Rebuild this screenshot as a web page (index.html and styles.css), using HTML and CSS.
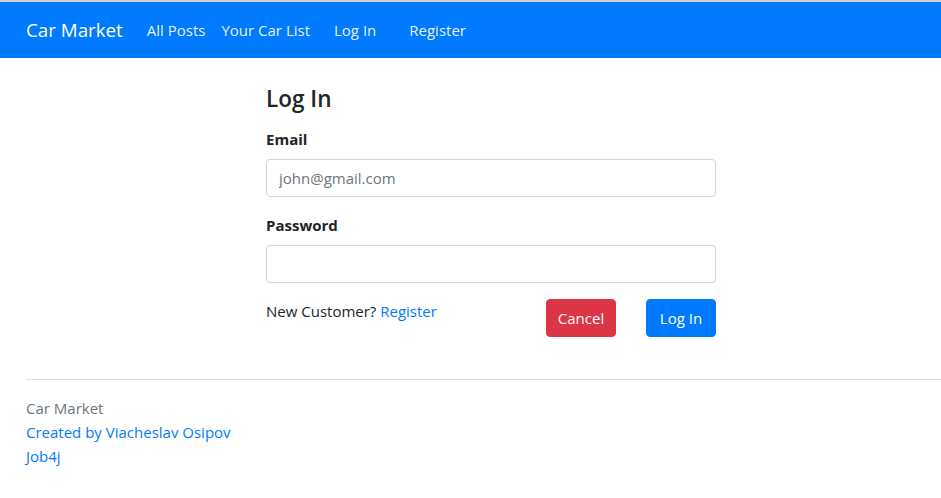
FILE: index.html
```html
<!DOCTYPE html>
<html lang="en">
<head>
<meta charset="utf-8">
<title>Car Market - Log In</title>
<link rel="stylesheet" href="styles.css">
</head>
<body>
<nav class="navbar">
  <a class="brand" href="#">Car Market</a>
  <ul class="nav">
    <li><a class="nav-link" href="#">All Posts</a></li>
    <li><a class="nav-link" href="#">Your Car List</a></li>
    <li class="nav-gap1"><a class="nav-link" href="#">Log In</a></li>
    <li class="nav-gap2"><a class="nav-link" href="#">Register</a></li>
  </ul>
</nav>
<main class="main">
  <div class="form-box">
    <h4 class="title">Log In</h4>
    <form class="form">
      <div class="form-group">
        <label class="label" for="email">Email</label>
        <input class="input" id="email" type="text" placeholder="john@gmail.com">
      </div>
      <div class="form-group">
        <label class="label" for="password">Password</label>
        <input class="input" id="password" type="password">
      </div>
      <div class="actions">
        <p class="hint">New Customer? <a class="link" href="#">Register</a></p>
        <div class="buttons">
          <button class="btn btn-danger" type="button">Cancel</button>
          <button class="btn btn-primary" type="submit">Log In</button>
        </div>
      </div>
    </form>
  </div>
</main>
<footer class="footer">
  <hr class="rule">
  <div class="footer-text">
    <div class="muted">Car Market</div>
    <div><a class="link" href="#">Created by Viacheslav Osipov</a></div>
    <div><a class="link" href="#">Job4j</a></div>
  </div>
</footer>
</body>
</html>
```
FILE: styles.css
```css
* { box-sizing: border-box; }
html, body { margin: 0; padding: 0; }
body {
  font-family: "Open Sans", "Noto Sans", sans-serif;
  font-size: 15px;
  line-height: 24px;
  color: #212529;
  background: #fff;
  border-top: 2px solid #cfcfcf;
}
a { text-decoration: none; }
.navbar {
  display: flex;
  align-items: center;
  height: 56px;
  padding: 0 26px;
  background: #007bff;
}
.brand {
  color: #fff;
  font-size: 18.75px;
  line-height: 30px;
  margin-right: 16px;
}
.nav {
  display: flex;
  list-style: none;
  margin: 0;
  padding: 0;
}
.nav-link {
  display: block;
  padding: 8px;
  color: rgba(255,255,255,0.92);
}
.nav-gap1 { margin-left: 8px; }
.nav-gap2 { margin-left: 17px; }
.main {
  padding: 26px 0 0 266px;
}
.form-box { width: 450px; }
.title {
  margin: 0 0 14px;
  font-size: 22.5px;
  line-height: 29px;
  font-weight: 600;
}
.form-group { margin-bottom: 16px; }
.label {
  display: block;
  font-weight: 700;
  margin-bottom: 8px;
}
.input {
  display: block;
  width: 100%;
  height: 38px;
  padding: 6px 12px;
  font: inherit;
  color: #495057;
  border: 1px solid #ced4da;
  border-radius: 4px;
  background: #fff;
}
.input::placeholder { color: #6c757d; }
.actions {
  display: flex;
  justify-content: space-between;
  align-items: flex-start;
}
.hint { margin: 0; }
.link { color: #007bff; }
.buttons {
  display: flex;
  gap: 30px;
}
.btn {
  width: 70px;
  height: 38px;
  padding: 6px 0;
  font: inherit;
  border: 1px solid transparent;
  border-radius: 4px;
  color: #fff;
  text-align: center;
}
.btn-danger { background: #dc3545; border-color: #dc3545; }
.btn-primary { background: #007bff; border-color: #007bff; }
.footer {
  margin-top: 42px;
  padding-left: 26px;
}
.rule {
  margin: 0;
  border: 0;
  border-top: 1px solid rgba(0,0,0,0.12);
}
.footer-text { padding-top: 16px; }
.muted { color: #6c757d; }
```
